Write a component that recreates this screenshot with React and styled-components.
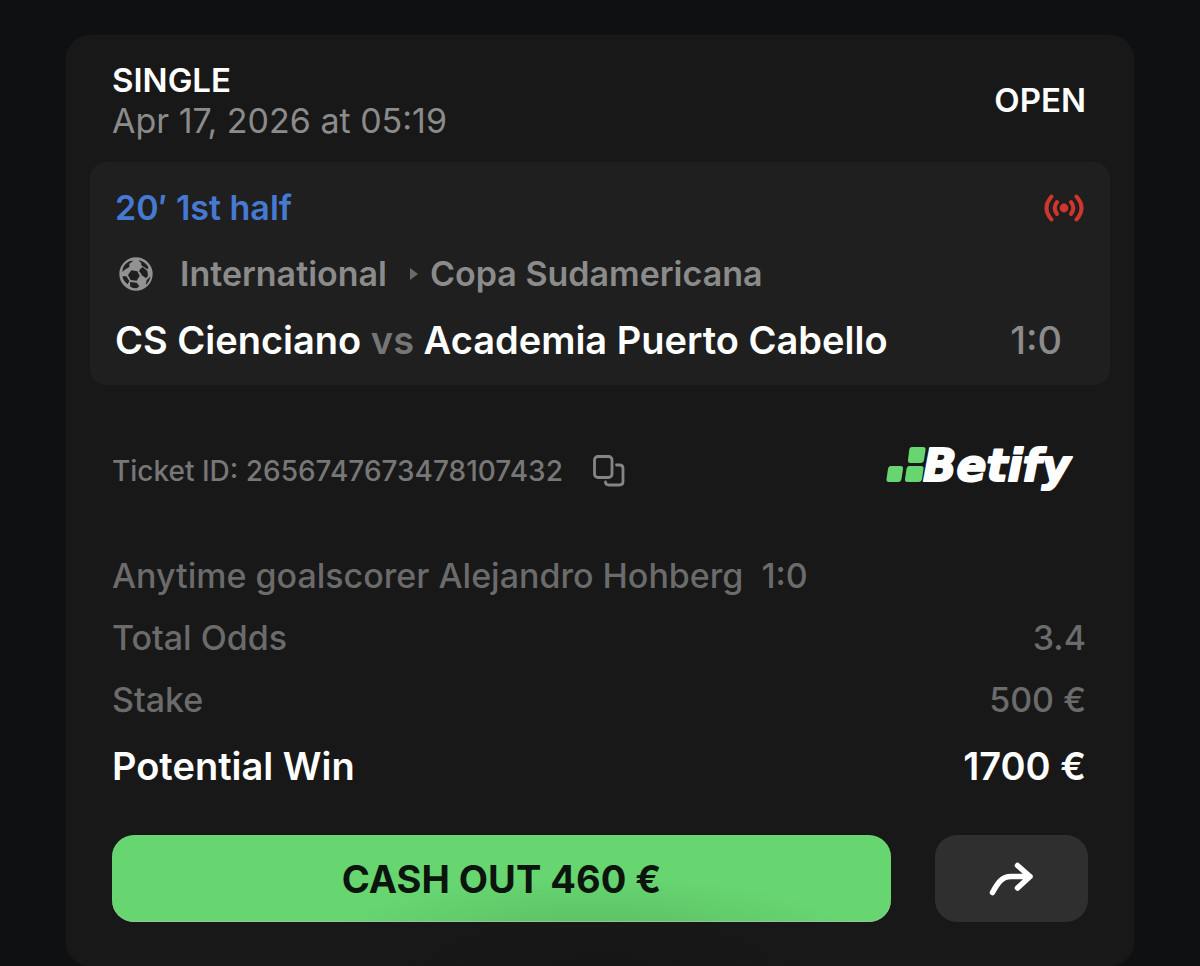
import React from "react";
import styled, { createGlobalStyle } from "styled-components";

const GlobalStyle = createGlobalStyle`
  * { box-sizing: border-box; }
  body {
    margin: 0;
    background: #0f1012;
    color: #fff;
    font-family: Inter, "Liberation Sans", sans-serif;
    font-size: 34px;
    font-weight: 500;
    line-height: 40px;
  }
  button { font: inherit; border: 0; cursor: pointer; }
`;

const Page = styled.main`
  padding: 35px 66px 0;
`;

const Ticket = styled.article`
  background: radial-gradient(ellipse 220px 60px at 50% 100%, #161616, #181818);
  border-radius: 24px;
  padding: 24px 24px 44px;
`;

const Header = styled.header`
  display: flex;
  justify-content: space-between;
  align-items: center;
  padding: 0 24px 0 22px;
  margin-bottom: 21px;
`;

const Kind = styled.h1`
  margin: 0;
  font-size: 33px;
  font-weight: 600;
  line-height: 42px;
`;

const Placed = styled.time`
  display: block;
  color: #8b8b8b;
  font-weight: 400;
  line-height: 40px;
`;

const Status = styled.span`
  font-size: 33px;
  font-weight: 600;
  line-height: 42px;
`;

const Match = styled.section`
  background: #1f1f1f;
  border-radius: 16px;
  padding: 26px 26px 25px 25px;
  display: flex;
  flex-direction: column;
  gap: 26px;
`;

const MatchRow = styled.div`
  display: flex;
  align-items: center;
  justify-content: ${(p) => (p.$spread ? "space-between" : "flex-start")};
`;

const Clock = styled.span`
  color: #467ad2;
  font-weight: 600;
`;

const Country = styled.span`
  color: #8b8b8b;
  font-weight: 600;
  margin-left: 23px;
`;

const League = styled.span`
  color: #8b8b8b;
  font-weight: 600;
`;

const Crumb = styled.svg`
  margin: 0 12px 0 22px;
`;

const Teams = styled.h2`
  margin: 0;
  font-size: 38px;
  font-weight: 600;
  line-height: 40px;
`;

const Versus = styled.span`
  color: #767676;
`;

const Score = styled.span`
  color: #8b8b8b;
  font-size: 38px;
  margin-right: 22px;
`;

const IdRow = styled.div`
  display: flex;
  justify-content: space-between;
  align-items: center;
  padding: 0 30px 0 22px;
  margin: 56px 0 55px;
`;

const TicketId = styled.div`
  display: flex;
  align-items: center;
  gap: 30px;
  color: #777;
  font-size: 28px;
`;

const CopyButton = styled.button`
  display: flex;
  padding: 0;
  background: none;
  color: #858585;
`;

const Brand = styled.div`
  display: flex;
  align-items: center;

  svg { overflow: visible; }
`;

const Details = styled.dl`
  margin: 0;
  padding: 0 24px 0 22px;
  display: flex;
  flex-direction: column;
  gap: 22px;
`;

const Detail = styled.div`
  display: flex;
  justify-content: ${(p) => (p.$inline ? "flex-start" : "space-between")};
  gap: 18px;
  color: ${(p) => (p.$strong ? "#fff" : "#6b6b6b")};
  font-size: ${(p) => (p.$strong ? "38px" : "34px")};
  font-weight: ${(p) => (p.$strong ? 600 : 500)};
  line-height: ${(p) => (p.$strong ? "48px" : "40px")};

  dd { margin: 0; }
`;

const Actions = styled.div`
  display: flex;
  gap: 44px;
  padding: 0 22px;
  margin-top: 45px;
`;

const CashOut = styled.button`
  flex: 1;
  height: 87px;
  border-radius: 22px;
  color: #0c150d;
  background: radial-gradient(ellipse 260px 60px at 62% 115%, #5cbd62, #67d671);
  box-shadow: inset 0 -1px 0 #8fc893;
  font-size: 38px;
  font-weight: 700;
`;

const Share = styled.button`
  display: flex;
  align-items: center;
  justify-content: center;
  width: 153px;
  height: 87px;
  border-radius: 22px;
  color: #fff;
  background: #2f2f2f;
`;

const LiveIcon = () => (
  <svg width="40" height="30" viewBox="0 0 40 30" fill="none" stroke="#d2352b" strokeWidth="4" strokeLinecap="round" role="img" aria-label="Live">
    <circle cx="20" cy="15" r="4.4" fill="#d2352b" stroke="none" />
    <path d="M13 9Q8.500 15 13 21M27 9Q31.500 15 27 21M7.500 3.500Q-2.500 15 7.500 26.500M32.500 3.500Q42.500 15 32.500 26.500" />
  </svg>
);

const BallIcon = () => (
  <svg width="42" height="34" viewBox="9 20 126 102" aria-hidden="true">
    <circle cx="72" cy="71" r="50" fill="#929292" />
    <g fill="#1f1f1f">
      <path d="M33 52Q40 38 54 32L64 31L52 40L52 50L38 58L31 65Z" />
      <path d="M79 29Q99 33 109 51L106 57L88 45L88 39Z" />
      <path d="M58 60L76 63L83 77L74 91L56 89L48 74Z" />
      <path d="M84 57L92 50L106 62L108 76L102 84L90 75L82 63Z" />
      <path d="M31 78L43 78L52 92L47 102Q34 92 31 78Z" />
      <path d="M54 95L74 97L82 108L74 114Q62 114 55 109Z" />
      <path d="M115 78Q113 94 101 104L104 90Z" />
    </g>
  </svg>
);

const CopyIcon = () => (
  <svg width="32" height="32" viewBox="0 0 32 32" fill="none" stroke="currentColor" strokeWidth="2.8" strokeLinecap="round">
    <rect x="1.500" y="1.500" width="17.500" height="21" rx="3.500" />
    <path d="M23.500 10H26.500Q30 10 30 13.500V26.500Q30 30 26.500 30H16Q12.500 30 12.500 27" />
  </svg>
);

const Logo = () => (
  <svg width="194" height="60" viewBox="0 -2 194 60" role="img" aria-label="Betify">
    <g fill="#67d671">
      <path d="M26 4H37Q40 4 39.500 7L38 17Q37.500 20 34.500 20H24.500Q21.500 20 22 17L23.200 7Q23.500 4 26 4Z" />
      <path d="M5 23H14.500Q17.500 23 17 26L15.500 36Q15 39 12 39H3Q0 39 .5 36L2 26Q2.500 23 5 23Z" />
      <path d="M23.500 23H35Q38 23 37.500 26L36 36Q35.500 39 32.500 39H21.500Q18.500 39 19 36L20.500 26Q21 23 23.500 23Z" />
    </g>
    <text x="37" y="38" fill="#fff" stroke="#fff" strokeWidth="2" strokeLinejoin="round" fontFamily="'DejaVu Sans', sans-serif" fontSize="44" fontStyle="italic" fontWeight="700">Betify</text>
  </svg>
);

const ShareIcon = () => (
  <svg width="46" height="34" viewBox="0 0 46 34" fill="none" stroke="currentColor" strokeWidth="5.5" strokeLinecap="round" strokeLinejoin="round">
    <path d="M3.500 30.500C9 20.500 13 14.500 22 14.500H41M28.500 3.500L41 14.500L28.500 26" />
  </svg>
);

export default function App() {
  return (
    <>
      <GlobalStyle />
      <Page>
        <Ticket>
          <Header>
            <div>
              <Kind>SINGLE</Kind>
              <Placed dateTime="2026-04-17T05:19">Apr 17, 2026 at 05:19</Placed>
            </div>
            <Status>OPEN</Status>
          </Header>
          <Match>
            <MatchRow $spread>
              <Clock>20′ 1st half</Clock>
              <LiveIcon />
            </MatchRow>
            <MatchRow>
              <BallIcon />
              <Country>International</Country>
              <Crumb width="9" height="12" viewBox="0 0 9 12" fill="#6a6a6a" aria-hidden="true">
                <path d="M1 0L9 6L1 12Z" />
              </Crumb>
              <League>Copa Sudamericana</League>
            </MatchRow>
            <MatchRow $spread>
              <Teams>
                CS Cienciano <Versus>vs</Versus> Academia Puerto Cabello
              </Teams>
              <Score>1:0</Score>
            </MatchRow>
          </Match>
          <IdRow>
            <TicketId>
              <span>Ticket ID: 2656747673478107432</span>
              <CopyButton type="button" aria-label="Copy ticket ID">
                <CopyIcon />
              </CopyButton>
            </TicketId>
            <Brand>
              <Logo />
            </Brand>
          </IdRow>
          <Details>
            <Detail $inline>
              <dt>Anytime goalscorer Alejandro Hohberg</dt>
              <dd>1:0</dd>
            </Detail>
            <Detail>
              <dt>Total Odds</dt>
              <dd>3.4</dd>
            </Detail>
            <Detail>
              <dt>Stake</dt>
              <dd>500 €</dd>
            </Detail>
            <Detail $strong>
              <dt>Potential Win</dt>
              <dd>1700 €</dd>
            </Detail>
          </Details>
          <Actions>
            <CashOut type="button">CASH OUT 460 €</CashOut>
            <Share type="button" aria-label="Share">
              <ShareIcon />
            </Share>
          </Actions>
        </Ticket>
      </Page>
    </>
  );
}
